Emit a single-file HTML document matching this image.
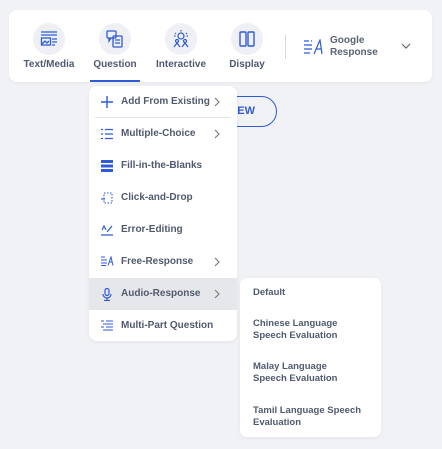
<!DOCTYPE html>
<html><head><style>
*{margin:0;padding:0;box-sizing:border-box}
body{width:442px;height:449px;background:#f1f2f6;font-family:"Liberation Sans",sans-serif;position:relative;overflow:hidden;color:#505a6e;font-weight:bold}
.card{position:absolute;left:9px;top:10px;width:423px;height:72px;background:#fff;border-radius:8px;box-shadow:0 1px 3px rgba(0,0,0,.05)}
.tab{position:absolute;top:13px;width:66px;text-align:center;font-size:10px}
.circ{width:32px;height:32px;border-radius:50%;background:#eef0f6;margin:0 auto 4px;display:flex;align-items:center;justify-content:center}
.ul{position:absolute;left:81px;top:70px;width:50px;height:2px;background:#2f5bd3}
.div{position:absolute;left:276px;top:25px;width:1px;height:24px;background:#d5d8e0}
.gr{position:absolute;left:321px;top:25px;font-size:10px;line-height:12px;color:#5b6375}
.btn{position:absolute;left:180px;top:96px;width:97px;height:31px;border:1.5px solid #2f5bd3;border-radius:16px;color:#2f5bd3;font-size:11px;line-height:28px;text-align:right;padding-right:21px}
.menu{position:absolute;left:89px;top:86px;width:148px;height:255px;background:#fff;border-radius:8px;box-shadow:0 1px 4px rgba(0,0,0,.06)}
.it{position:absolute;left:0;width:148px;height:32px;font-size:10px;line-height:32px;padding-left:32px}
.it svg{position:absolute;left:12px;top:10px}
.it svg.ch{left:125px;top:11px}
.hl{background:#e6e7eb}
.sub{position:absolute;left:240px;top:278px;width:141px;height:159px;background:#fff;border-radius:7px;box-shadow:0 1px 4px rgba(0,0,0,.06);font-size:9.5px;line-height:12px}
.sub div{position:absolute;left:13px}
</style></head><body>
<div class="card">
 <div class="tab" style="left:7px"><div class="circ"><svg width="18" height="16" viewBox="0 0 18 16" fill="none" stroke="#2f5bd3" stroke-width="1.3"><path d="M1 1h16M1 4h16"/><rect x="1.5" y="7" width="9" height="7"/><path d="M2 13l3-3 2 2 2-2M12 8h5M12 11h5M12 14h3"/></svg></div>Text/Media</div>
 <div class="tab" style="left:73px"><div class="circ"><svg width="18" height="18" viewBox="0 0 18 18" fill="none" stroke="#2f5bd3" stroke-width="1.3"><rect x="1" y="1" width="9" height="7" rx="1"/><path d="M3 8v3l2-3"/><rect x="7" y="6" width="9" height="11" rx="1"/><path d="M9 10h5M9 13h5"/></svg></div>Question</div>
 <div class="tab" style="left:139px"><div class="circ"><svg width="18" height="18" viewBox="0 0 18 18" fill="none" stroke="#2f5bd3" stroke-width="1.2"><circle cx="9" cy="6" r="3"/><path d="M9 0v1.5M3 3l1 1M15 3l-1 1M2 6h1.5M16 6h-1.5"/><circle cx="5" cy="11" r="1.5"/><circle cx="13" cy="11" r="1.5"/><path d="M2 17l3-4 3 4M10 17l3-4 3 4"/></svg></div>Interactive</div>
 <div class="tab" style="left:205px"><div class="circ"><svg width="16" height="16" viewBox="0 0 16 16" fill="none" stroke="#2f5bd3" stroke-width="1.4"><rect x="1" y="1" width="6" height="14" rx="1"/><rect x="9" y="1" width="6" height="14" rx="1"/></svg></div>Display</div>
 <div class="ul"></div>
 <div class="div"></div>
 <svg style="position:absolute;left:295px;top:29px" width="20" height="16" viewBox="0 0 20 16" fill="none" stroke="#2f5bd3" stroke-width="1.2"><path d="M0 2h5M0 6h8M0 10h8M0 14h6M7 2h1"/><path d="M10 15L16 1l2 14M12 10h5"/></svg>
 <div class="gr">Google<br>Response</div>
 <svg style="position:absolute;left:392px;top:33px" width="10" height="6" viewBox="0 0 10 6" fill="none" stroke="#666" stroke-width="1.2"><path d="M1 1l4 4 4-4"/></svg>
</div>
<div class="btn">IEW</div>
<div class="menu">
 <div class="it" style="top:0"><svg width="12" height="12" viewBox="0 0 12 12" stroke="#2f5bd3" stroke-width="1.4"><path d="M6 0v12M0 6h12"/></svg>Add From Existing<svg class="ch" width="6" height="10" viewBox="0 0 6 10" fill="none" stroke="#777" stroke-width="1.1"><path d="M1 1l4 4-4 4"/></svg></div>
 <div style="position:absolute;left:6px;top:31px;width:135px;height:1px;background:#e2e4e8"></div>
 <div class="it" style="top:32px"><svg width="12" height="12" viewBox="0 0 12 12" fill="none" stroke="#2f5bd3" stroke-width="1.2"><path d="M0 1.5h2M4 1.5h8M0 6h2M4 6h8M0 10.5h2M4 10.5h8"/></svg>Multiple-Choice<svg class="ch" width="6" height="10" viewBox="0 0 6 10" fill="none" stroke="#777" stroke-width="1.1"><path d="M1 1l4 4-4 4"/></svg></div>
 <div class="it" style="top:64px"><svg width="12" height="12" viewBox="0 0 12 12" fill="#2f5bd3"><rect x="0" y="0" width="12" height="3"/><rect x="0" y="4.5" width="12" height="3"/><rect x="0" y="9" width="12" height="3"/></svg>Fill-in-the-Blanks</div>
 <div class="it" style="top:96px"><svg width="12" height="12" viewBox="0 0 12 12" fill="none" stroke="#2f5bd3" stroke-width="1.1" stroke-dasharray="1.5 1.5"><rect x="3" y="1" width="8" height="10"/><path d="M0 7l4 0" stroke-dasharray="none"/></svg>Click-and-Drop</div>
 <div class="it" style="top:128px"><svg width="12" height="12" viewBox="0 0 12 12" fill="none" stroke="#2f5bd3" stroke-width="1.2"><path d="M1 6l2-4 2 4M6 8l5-6M0 11h12"/></svg>Error-Editing</div>
 <div class="it" style="top:160px"><svg width="13" height="10" viewBox="0 0 13 10" fill="none" stroke="#2f5bd3" stroke-width="1"><path d="M0 1h4M0 4h6M0 7h6M0 9.5h5M7 9.5L10 1l2 8.5M8 6h3"/></svg>Free-Response<svg class="ch" width="6" height="10" viewBox="0 0 6 10" fill="none" stroke="#777" stroke-width="1.1"><path d="M1 1l4 4-4 4"/></svg></div>
 <div class="it hl" style="top:192px"><svg width="12" height="13" viewBox="0 0 12 13" fill="none" stroke="#2f5bd3" stroke-width="1.2"><rect x="4" y="0.5" width="4" height="7" rx="2"/><path d="M2 6a4 4 0 008 0M6 10v3M3 12.5h6"/></svg>Audio-Response<svg class="ch" width="6" height="10" viewBox="0 0 6 10" fill="none" stroke="#777" stroke-width="1.1"><path d="M1 1l4 4-4 4"/></svg></div>
 <div class="it" style="top:224px"><svg width="12" height="12" viewBox="0 0 12 12" fill="none" stroke="#2f5bd3" stroke-width="1.1"><path d="M0 1h3M5 1h7M2 4h10M0 7h3M5 7h7M2 10h10"/></svg>Multi-Part Question</div>
</div>
<div class="sub">
 <div style="top:9px">Default</div>
 <div style="top:40px">Chinese Language<br>Speech Evaluation</div>
 <div style="top:83px">Malay Language<br>Speech Evaluation</div>
 <div style="top:127px">Tamil Language Speech<br>Evaluation</div>
</div>
</body></html>
